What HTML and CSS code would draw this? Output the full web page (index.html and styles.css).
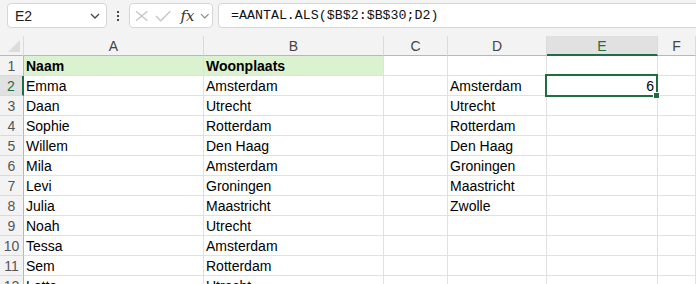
FILE: index.html
```html
<!doctype html>
<html>
<head>
  <meta charset="utf-8">
  <title>Werkmap - AANTAL.ALS</title>
  <link rel="stylesheet" href="styles.css">
</head>
<body>
  <div class="toolbar">
    <div class="name-box">
      <span>E2</span>
      <svg class="chev" width="10" height="6" viewBox="0 0 10 6"><path d="M1 1 L5 5 L9 1" fill="none" stroke="#444" stroke-width="1.3"/></svg>
    </div>
    <div class="dots"><i></i><i></i><i></i></div>
    <div class="fx-box">
      <svg width="14" height="12" viewBox="0 0 14 12"><path d="M1 1 L13 11 M13 1 L1 11" stroke="#c4c4c4" stroke-width="1.3" fill="none"/></svg>
      <svg width="17" height="12" viewBox="0 0 17 12"><path d="M1 6 L6 11 L16 1" stroke="#c4c4c4" stroke-width="1.3" fill="none"/></svg>
      <span class="fx">fx</span>
      <svg width="10" height="6" viewBox="0 0 10 6"><path d="M1 1 L5 5 L9 1" fill="none" stroke="#888" stroke-width="1.2"/></svg>
    </div>
    <div class="formula">=AANTAL.ALS($B$2:$B$30;D2)</div>
  </div>

  <div class="sheet">
    <div class="ch corner"><span class="tri"></span></div>
    <div class="ch">A</div>
    <div class="ch">B</div>
    <div class="ch">C</div>
    <div class="ch">D</div>
    <div class="ch active">E</div>
    <div class="ch">F</div>

    <div class="rh">1</div>
    <div class="c head">Naam</div>
    <div class="c head">Woonplaats</div>
    <div class="c"></div><div class="c"></div><div class="c"></div><div class="c"></div>

    <div class="rh active">2</div>
    <div class="c">Emma</div><div class="c">Amsterdam</div><div class="c"></div>
    <div class="c">Amsterdam</div>
    <div class="c num sel">6<span class="selbox"><span class="handle"></span></span></div>
    <div class="c"></div>

    <div class="rh">3</div>
    <div class="c">Daan</div><div class="c">Utrecht</div><div class="c"></div>
    <div class="c">Utrecht</div><div class="c"></div><div class="c"></div>

    <div class="rh">4</div>
    <div class="c">Sophie</div><div class="c">Rotterdam</div><div class="c"></div>
    <div class="c">Rotterdam</div><div class="c"></div><div class="c"></div>

    <div class="rh">5</div>
    <div class="c">Willem</div><div class="c">Den Haag</div><div class="c"></div>
    <div class="c">Den Haag</div><div class="c"></div><div class="c"></div>

    <div class="rh">6</div>
    <div class="c">Mila</div><div class="c">Amsterdam</div><div class="c"></div>
    <div class="c">Groningen</div><div class="c"></div><div class="c"></div>

    <div class="rh">7</div>
    <div class="c">Levi</div><div class="c">Groningen</div><div class="c"></div>
    <div class="c">Maastricht</div><div class="c"></div><div class="c"></div>

    <div class="rh">8</div>
    <div class="c">Julia</div><div class="c">Maastricht</div><div class="c"></div>
    <div class="c">Zwolle</div><div class="c"></div><div class="c"></div>

    <div class="rh">9</div>
    <div class="c">Noah</div><div class="c">Utrecht</div><div class="c"></div>
    <div class="c"></div><div class="c"></div><div class="c"></div>

    <div class="rh">10</div>
    <div class="c">Tessa</div><div class="c">Amsterdam</div><div class="c"></div>
    <div class="c"></div><div class="c"></div><div class="c"></div>

    <div class="rh">11</div>
    <div class="c">Sem</div><div class="c">Rotterdam</div><div class="c"></div>
    <div class="c"></div><div class="c"></div><div class="c"></div>

    <div class="rh">12</div>
    <div class="c">Lotte</div><div class="c">Utrecht</div><div class="c"></div>
    <div class="c"></div><div class="c"></div><div class="c"></div>
  </div>
</body>
</html>
```

FILE: styles.css
```css
/* ========== Base ========== */
body {
  margin: 0;
  background: #f3f3f3;
  font-family: "Liberation Sans", Arial, sans-serif;
  overflow: hidden;
}

/* ========== Formula bar ========== */
.toolbar {
  display: flex;
  align-items: flex-start;
  height: 36px;
  padding: 3px 0 0 7px;
  box-sizing: border-box;
}

.name-box {
  width: 100px;
  height: 25px;
  box-sizing: border-box;
  background: #fff;
  border: 1px solid #d6d6d6;
  border-radius: 4px;
  display: flex;
  align-items: center;
  justify-content: space-between;
  padding: 0 6px 0 7px;
  font-size: 14px;
  color: #222;
}

.dots {
  width: 22px;
  height: 25px;
  display: flex;
  flex-direction: column;
  align-items: center;
  justify-content: center;
  gap: 2px;
}

.dots i {
  display: block;
  width: 2px;
  height: 2px;
  background: #444;
}

.fx-box {
  width: 84px;
  height: 25px;
  box-sizing: border-box;
  background: #fff;
  border: 1px solid #d6d6d6;
  border-radius: 4px;
  display: flex;
  align-items: center;
  gap: 7px;
  padding: 0 3px 0 5px;
}

.fx {
  font-family: "DejaVu Serif", "Liberation Serif", serif;
  font-style: italic;
  font-size: 15px;
  color: #333;
  margin-left: 2px;
  margin-right: -2px;
}

.formula {
  flex: 1;
  height: 25px;
  box-sizing: border-box;
  margin-left: 5px;
  margin-right: -6px;
  background: #fff;
  border: 1px solid #d6d6d6;
  border-radius: 4px;
  padding: 0 0 0 12px;
  font-family: "Liberation Mono", "DejaVu Sans Mono", monospace;
  font-size: 13.3px;
  line-height: 23px;
  color: #111;
}

/* ========== Grid ========== */
.sheet {
  display: grid;
  grid-template-columns: 24px 180px 180px 64px 99px 111px 1fr;
  grid-auto-rows: 20px;
  background: #fff;
}

.ch {
  background: #f3f3f3;
  border-right: 1px solid #dadada;
  border-bottom: 1px solid #b8b8b8;
  text-align: center;
  font-size: 14px;
  line-height: 20px;
  color: #444;
}

.ch.active {
  background: #e1e1e1;
  color: #1e6e42;
  border-bottom: 2px solid #1e6e42;
}

.corner {
  position: relative;
}

.tri {
  position: absolute;
  right: 3px;
  bottom: 3px;
  width: 0;
  height: 0;
  border-left: 12px solid transparent;
  border-bottom: 12px solid #dcdcdc;
}

.rh {
  background: #f3f3f3;
  border-right: 1px solid #b8b8b8;
  border-bottom: 1px solid #dadada;
  text-align: center;
  font-size: 14px;
  line-height: 20px;
  color: #555;
}

.rh.active {
  background: #e1e1e1;
  color: #1e6e42;
  border-right: 2px solid #1e6e42;
}

.c {
  border-right: 1px solid #e1e1e1;
  border-bottom: 1px solid #e1e1e1;
  padding: 1px 2px 0 2px;
  font-size: 14px;
  line-height: 19px;
  color: #000;
  white-space: nowrap;
  overflow: hidden;
}

.c.head {
  background: #daf2d0;
  font-weight: bold;
}

.c.num {
  text-align: right;
  padding-right: 3px;
}

.c.sel {
  position: relative;
  overflow: visible;
}

.selbox {
  position: absolute;
  top: -2px;
  left: -2px;
  right: -1px;
  bottom: -2px;
  border: 2px solid #1e6e42;
}

.handle {
  position: absolute;
  right: -4px;
  bottom: -4px;
  width: 5px;
  height: 5px;
  background: #1e6e42;
  border: 1px solid #fff;
}
```
